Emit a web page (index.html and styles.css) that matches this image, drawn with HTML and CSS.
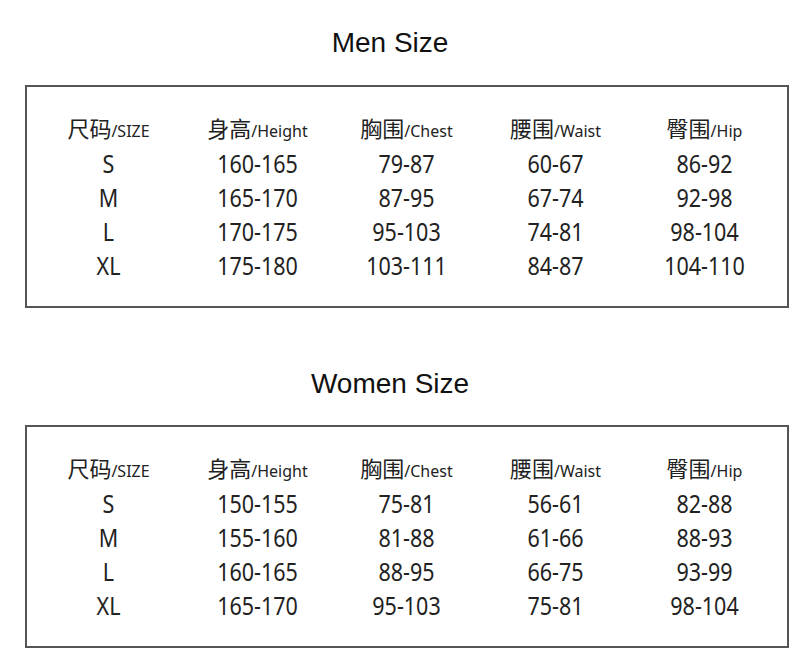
FILE: index.html
```html
<!DOCTYPE html>
<html lang="en">
<head>
<meta charset="utf-8">
<title>Size Chart</title>
<link rel="stylesheet" href="styles.css">
</head>
<body>
<main class="page">
  <section class="chart">
    <h2 class="title">Men Size</h2>
    <div class="box">
      <div class="grid">
        <div class="head"><span class="zh">尺码</span><span class="en">/SIZE</span></div>
        <div class="head"><span class="zh">身高</span><span class="en">/Height</span></div>
        <div class="head"><span class="zh">胸围</span><span class="en">/Chest</span></div>
        <div class="head"><span class="zh">腰围</span><span class="en">/Waist</span></div>
        <div class="head"><span class="zh">臀围</span><span class="en">/Hip</span></div>

        <div class="cell">S</div><div class="cell">160-165</div><div class="cell">79-87</div><div class="cell">60-67</div><div class="cell">86-92</div>
        <div class="cell">M</div><div class="cell">165-170</div><div class="cell">87-95</div><div class="cell">67-74</div><div class="cell">92-98</div>
        <div class="cell">L</div><div class="cell">170-175</div><div class="cell">95-103</div><div class="cell">74-81</div><div class="cell">98-104</div>
        <div class="cell">XL</div><div class="cell">175-180</div><div class="cell">103-111</div><div class="cell">84-87</div><div class="cell">104-110</div>
      </div>
    </div>
  </section>

  <section class="chart chart-second">
    <h2 class="title">Women Size</h2>
    <div class="box">
      <div class="grid">
        <div class="head"><span class="zh">尺码</span><span class="en">/SIZE</span></div>
        <div class="head"><span class="zh">身高</span><span class="en">/Height</span></div>
        <div class="head"><span class="zh">胸围</span><span class="en">/Chest</span></div>
        <div class="head"><span class="zh">腰围</span><span class="en">/Waist</span></div>
        <div class="head"><span class="zh">臀围</span><span class="en">/Hip</span></div>

        <div class="cell">S</div><div class="cell">150-155</div><div class="cell">75-81</div><div class="cell">56-61</div><div class="cell">82-88</div>
        <div class="cell">M</div><div class="cell">155-160</div><div class="cell">81-88</div><div class="cell">61-66</div><div class="cell">88-93</div>
        <div class="cell">L</div><div class="cell">160-165</div><div class="cell">88-95</div><div class="cell">66-75</div><div class="cell">93-99</div>
        <div class="cell">XL</div><div class="cell">165-170</div><div class="cell">95-103</div><div class="cell">75-81</div><div class="cell">98-104</div>
      </div>
    </div>
  </section>
</main>
</body>
</html>
```

FILE: styles.css
```css
html, body {
  margin: 0;
  padding: 0;
  background: #ffffff;
}

.page {
  width: 780px;
  padding-top: 27px;
}

.chart-second {
  margin-top: 60px;
}

.title {
  margin: 0 0 26px 0;
  font-family: "Liberation Sans", Arial, sans-serif;
  font-weight: 400;
  font-size: 28px;
  line-height: 32px;
  text-align: center;
  color: #111111;
}

.chart-second .title {
  margin-bottom: 25px;
}

.box {
  margin-left: 25px;
  width: 764px;
  height: 223px;
  box-sizing: border-box;
  border: 2px solid #555555;
  padding: 26px 0 0 7px;
}

.grid {
  display: grid;
  grid-template-columns: repeat(5, 149px);
  grid-auto-rows: 34px;
  color: #222222;
}

.head,
.cell {
  text-align: center;
  white-space: nowrap;
}

.head {
  line-height: 28px;
}

.zh {
  font-family: "Noto Sans CJK SC", "Noto Sans", sans-serif;
  font-size: 22px;
}

.en {
  font-family: "Noto Sans", sans-serif;
  font-size: 16px;
}

.cell {
  font-family: "Noto Sans", sans-serif;
  font-size: 21.5px;
  line-height: 34px;
  transform: scaleY(1.18);
}
```
